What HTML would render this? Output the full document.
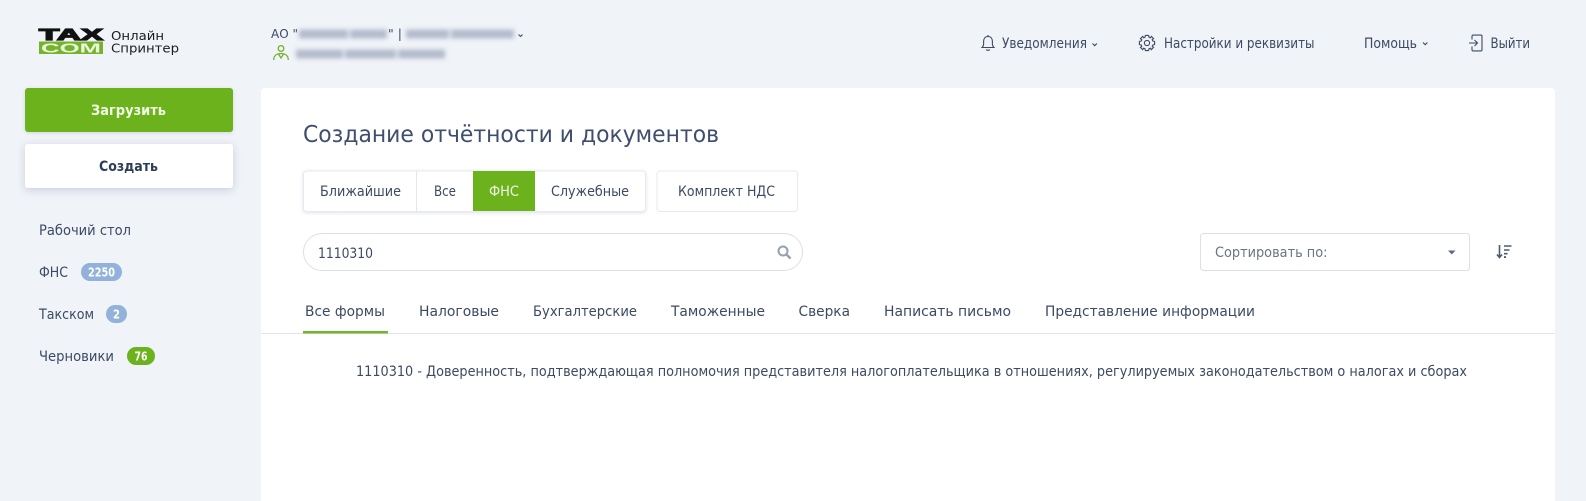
<!DOCTYPE html>
<html lang="ru">
<head>
<meta charset="utf-8">
<title>Онлайн Спринтер</title>
<style>
html,body{margin:0;padding:0;width:1586px;height:501px;overflow:hidden;background:#f0f3f8}
svg{display:block;filter:blur(.3px)}
text{font-family:"DejaVu Sans","Liberation Sans",sans-serif;font-size:13.8px;fill:#3c4b63}
.b{font-weight:700}
</style>
</head>
<body>
<svg width="1586" height="501" viewBox="0 0 1586 501" xmlns="http://www.w3.org/2000/svg">
<defs>
<filter id="bl" x="-20%" y="-100%" width="140%" height="300%"><feGaussianBlur stdDeviation="2.2"/></filter>
<filter id="sh" x="-10%" y="-30%" width="120%" height="170%"><feDropShadow dx="0" dy="2" stdDeviation="4" flood-color="#39507a" flood-opacity=".22"/></filter>
<filter id="sh2" x="-10%" y="-30%" width="120%" height="170%"><feDropShadow dx="0" dy="1" stdDeviation="1.5" flood-color="#39507a" flood-opacity=".16"/></filter>
</defs>

<!-- logo -->
<text x="39" y="39.8" textLength="64" lengthAdjust="spacingAndGlyphs" style="font:900 16px 'Liberation Sans',sans-serif;fill:#111;stroke:#111;stroke-width:1.2">TAX</text>
<rect x="39" y="41.5" width="64" height="12.5" fill="#74b32c"/>
<text x="41" y="52.6" textLength="60" lengthAdjust="spacingAndGlyphs" style="font:900 13px 'Liberation Sans',sans-serif;fill:#eaf5dc">COM</text>
<text x="111" y="40" textLength="53" lengthAdjust="spacingAndGlyphs" style="font-size:12.5px;fill:#1c1c1c">Онлайн</text>
<text x="111" y="52.5" textLength="68" lengthAdjust="spacingAndGlyphs" style="font-size:12.5px;fill:#1c1c1c">Спринтер</text>

<!-- company -->
<text x="271" y="38" textLength="27" lengthAdjust="spacingAndGlyphs" style="font-size:12.5px">АО "</text>
<g fill="#b4bccd" filter="url(#bl)">
<rect x="299" y="29.500" width="49" height="9"/>
<rect x="350" y="29.500" width="37" height="9"/>
<rect x="406" y="29.500" width="43" height="9"/>
<rect x="451" y="29.500" width="63" height="9"/>
<rect x="296" y="49.500" width="47" height="9"/>
<rect x="345" y="49.500" width="51" height="9"/>
<rect x="398" y="49.500" width="47" height="9"/>
</g>
<text x="388" y="38" style="font-size:12.5px">" |</text>
<path d="M518.500 34.500l2 2 2-2" fill="none" stroke="#3c4b63" stroke-width="1.100"/>
<g fill="none" stroke="#74b32c" stroke-width="1.300">
<circle cx="281" cy="48.500" r="2.800"/>
<path d="M273.700 60c0-4 2.600-6.500 7.300-6.500s7.300 2.500 7.300 6.500"/>
<path d="M278.500 54l2.500 4 2.500-4"/>
</g>

<!-- top nav -->
<g fill="none" stroke="#3c4b63" stroke-width="1.100">
<path d="M988 36.500c-2.900 0-4.400 2.200-4.400 5v3c0 1.200-.9 2.200-1.600 3h12c-.7-.8-1.600-1.800-1.600-3v-3c0-2.800-1.500-5-4.400-5z"/>
<path d="M988 35v1.500M986.300 49.500c.4 1 3 1 3.400 0"/>
<path d="M1092.500 43.500l2.200 2.200 2.200-2.200"/>
<circle cx="1147" cy="43" r="2.600"/>
<polygon transform="translate(1147 43)" points="1.6,-7.6 2,-5.8 3.3,-5.2 4.3,-6.6 6.6,-4.3 5.2,-3.3 5.8,-2 7.6,-1.6 7.6,1.6 5.8,2 5.2,3.3 6.6,4.3 4.3,6.6 3.3,5.2 2,5.8 1.6,7.6 -1.6,7.6 -2,5.8 -3.3,5.2 -4.3,6.6 -6.6,4.3 -5.2,3.3 -5.8,2 -7.6,1.6 -7.6,-1.6 -5.8,-2 -5.2,-3.3 -6.6,-4.3 -4.3,-6.6 -3.3,-5.2 -2,-5.8 -1.6,-7.6"/>
<path d="M1423 42.500l2.200 2.200 2.200-2.200"/>
<path d="M1472 39.500v-3.200c0-.7.500-1.200 1.200-1.200h7.600c.7 0 1.200.5 1.200 1.200v13.400c0 .7-.5 1.200-1.200 1.200h-7.600c-.7 0-1.200-.5-1.200-1.200v-3.200"/>
<path d="M1469 43h8.500M1474.500 40l3 3-3 3"/>
</g>
<text x="1002" y="48" textLength="85" lengthAdjust="spacingAndGlyphs">Уведомления</text>
<text x="1164" y="48" textLength="150.500" lengthAdjust="spacingAndGlyphs">Настройки и реквизиты</text>
<text x="1364" y="48" textLength="53" lengthAdjust="spacingAndGlyphs">Помощь</text>
<text x="1490.500" y="48" textLength="39.500" lengthAdjust="spacingAndGlyphs">Выйти</text>

<!-- sidebar -->
<rect x="25" y="88" width="208" height="44" rx="3" fill="#6cb21c" filter="url(#sh2)"/>
<text x="91" y="115" textLength="75" lengthAdjust="spacingAndGlyphs" class="b" style="fill:#f2fae6">Загрузить</text>
<rect x="25" y="144" width="208" height="44" rx="3" fill="#fff" filter="url(#sh)"/>
<text x="99" y="171" textLength="59" lengthAdjust="spacingAndGlyphs" class="b" style="fill:#2c3d58">Создать</text>

<text x="39" y="235" textLength="92" lengthAdjust="spacingAndGlyphs">Рабочий стол</text>
<text x="39" y="277" textLength="29" lengthAdjust="spacingAndGlyphs">ФНС</text>
<rect x="81" y="263" width="41" height="18" rx="9" fill="#92b2da"/>
<text x="88" y="276.500" textLength="27" lengthAdjust="spacingAndGlyphs" class="b" style="font-size:12px;fill:#fff">2250</text>
<text x="39" y="319" textLength="55" lengthAdjust="spacingAndGlyphs">Такском</text>
<rect x="106" y="305" width="21" height="18" rx="9" fill="#92b2da"/>
<text x="113" y="318.500" textLength="7" lengthAdjust="spacingAndGlyphs" class="b" style="font-size:12px;fill:#fff">2</text>
<text x="39" y="361" textLength="75" lengthAdjust="spacingAndGlyphs">Черновики</text>
<rect x="127" y="347" width="28" height="18" rx="9" fill="#6cb21c"/>
<text x="134.500" y="360.500" textLength="13" lengthAdjust="spacingAndGlyphs" class="b" style="font-size:12px;fill:#fff">76</text>

<!-- card -->
<path d="M261 501V92a4 4 0 0 1 4-4H1551a4 4 0 0 1 4 4V501z" fill="#fff"/>
<text x="303" y="142" textLength="416" lengthAdjust="spacingAndGlyphs" style="font-size:23px;fill:#3f4e6c">Создание отчётности и документов</text>

<!-- group -->
<rect x="303.500" y="171" width="342" height="40.500" rx="3" fill="#fff" stroke="#e6e9ee" filter="url(#sh2)"/>
<path d="M416.500 171v40" stroke="#e3e6ea"/>
<rect x="473" y="171" width="62" height="40" fill="#6cb21c"/>
<text x="320" y="196" textLength="81" lengthAdjust="spacingAndGlyphs">Ближайшие</text>
<text x="434" y="196" textLength="22" lengthAdjust="spacingAndGlyphs">Все</text>
<text x="489" y="196" textLength="30" lengthAdjust="spacingAndGlyphs" style="fill:#eef8e0">ФНС</text>
<text x="551" y="196" textLength="78" lengthAdjust="spacingAndGlyphs">Служебные</text>
<rect x="657" y="171" width="140.500" height="40.500" rx="3" fill="#fff" stroke="#e6e9ee"/>
<text x="678" y="196" textLength="97" lengthAdjust="spacingAndGlyphs">Комплект НДС</text>

<!-- search -->
<rect x="303.500" y="233.500" width="499" height="37" rx="18.500" fill="#fff" stroke="#dcdfe4"/>
<text x="318" y="258" textLength="55" lengthAdjust="spacingAndGlyphs">1110310</text>
<g fill="none" stroke="#97a0ae" stroke-width="2"><circle cx="783" cy="251" r="4.500"/><path d="M786.500 254.500l4 4" stroke-width="2.400"/></g>

<!-- sort -->
<rect x="1200.500" y="233.500" width="269" height="37" rx="3" fill="#fff" stroke="#dcdfe4"/>
<text x="1215" y="257" textLength="112.500" lengthAdjust="spacingAndGlyphs" style="fill:#6b7585">Сортировать по:</text>
<path d="M1448 250.500h7.500l-3.750 4z" fill="#5d6b82"/>
<g fill="none" stroke="#4a5a72" stroke-width="1.600">
<path d="M1499.500 245v12M1497 254.500l2.500 3 2.500-3"/>
<path d="M1504 246h7.500M1504 250h5.500M1504 253.700h3.500"/>
</g>
<rect x="1504" y="256.200" width="2" height="1.800" fill="#4a5a72"/>

<!-- tabs -->
<text x="305" y="316" textLength="80" lengthAdjust="spacingAndGlyphs">Все формы</text>
<text x="419" y="316" textLength="80" lengthAdjust="spacingAndGlyphs">Налоговые</text>
<text x="533" y="316" textLength="104" lengthAdjust="spacingAndGlyphs">Бухгалтерские</text>
<text x="671" y="316" textLength="94" lengthAdjust="spacingAndGlyphs">Таможенные</text>
<text x="798.500" y="316" textLength="51.500" lengthAdjust="spacingAndGlyphs">Сверка</text>
<text x="884" y="316" textLength="127" lengthAdjust="spacingAndGlyphs">Написать письмо</text>
<text x="1045" y="316" textLength="210" lengthAdjust="spacingAndGlyphs">Представление информации</text>
<rect x="261" y="333" width="1294" height="1" fill="#e2e4e8"/>
<rect x="303" y="331" width="85" height="2.500" fill="#74b32c"/>

<text x="356" y="376" textLength="1111" lengthAdjust="spacingAndGlyphs">1110310 - Доверенность, подтверждающая полномочия представителя налогоплательщика в отношениях, регулируемых законодательством о налогах и сборах</text>
</svg>
</body>
</html>
